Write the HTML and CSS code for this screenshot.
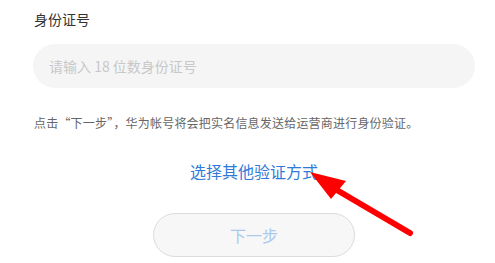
FILE: index.html
```html
<!DOCTYPE html>
<html lang="zh-CN">
<head>
    <meta charset="UTF-8">
    <meta name="viewport" content="width=device-width, initial-scale=1.0">
    <title>身份验证</title>
    <link rel="stylesheet" href="styles.css">
</head>
<body>
    <div class="container">
        <div class="form-group">
            <label for="idNumber">身份证号</label>
            <input type="text" id="idNumber" placeholder="请输入 18 位数身份证号">
        </div>

        <p class="notice">点击“下一步”，华为帐号将会把实名信息发送给运营商进行身份验证。</p>

        <a href="#" class="other-way">选择其他验证方式</a>

        <button type="button" class="next-btn" disabled>下一步</button>
    </div>

    <!-- annotation arrow pointing at the link -->
    <svg class="arrow" width="495" height="263" viewBox="0 0 495 263">
        <line x1="410" y1="233" x2="330" y2="186" stroke="#ff0000" stroke-width="6" stroke-linecap="round"/>
        <polygon points="310,172 346,181 331,199" fill="#ff0000"/>
    </svg>
</body>
</html>
```

FILE: styles.css
```css
body {
    font-family: "Noto Sans CJK SC", "Liberation Sans", sans-serif;
    background-color: #fff;
    margin: 0;
    padding: 0;
}
.container {
    width: 442px;
    padding: 9px 0 0 33px;
    display: flex;
    flex-direction: column;
}
.form-group label {
    display: block;
    font-size: 14px;
    color: #333;
    line-height: 20px;
    padding-left: 1px;
    margin-bottom: 15px;
}
.form-group input {
    display: block;
    box-sizing: border-box;
    width: 442px;
    height: 44px;
    border: none;
    border-radius: 22px;
    background-color: #f5f5f5;
    padding: 0 16px;
    font-family: inherit;
    font-size: 14px;
    color: #333;
    outline: none;
}
.form-group input::placeholder {
    color: #c8c8c8;
}
.notice {
    margin: 26px 0 0 1px;
    font-size: 12px;
    line-height: 18px;
    letter-spacing: 0.2px;
    color: #666;
}
.other-way {
    align-self: center;
    margin-top: 28px;
    font-size: 16px;
    line-height: 22px;
    color: #2f7bd7;
    text-decoration: none;
}
.next-btn {
    align-self: center;
    margin-top: 31px;
    width: 202px;
    height: 44px;
    border: 1px solid #dcdcdc;
    border-radius: 22px;
    background-color: #f7f7f7;
    color: #a9c9ef;
    font-family: inherit;
    font-size: 16px;
}
.arrow {
    position: absolute;
    left: 0;
    top: 0;
    pointer-events: none;
}
```
